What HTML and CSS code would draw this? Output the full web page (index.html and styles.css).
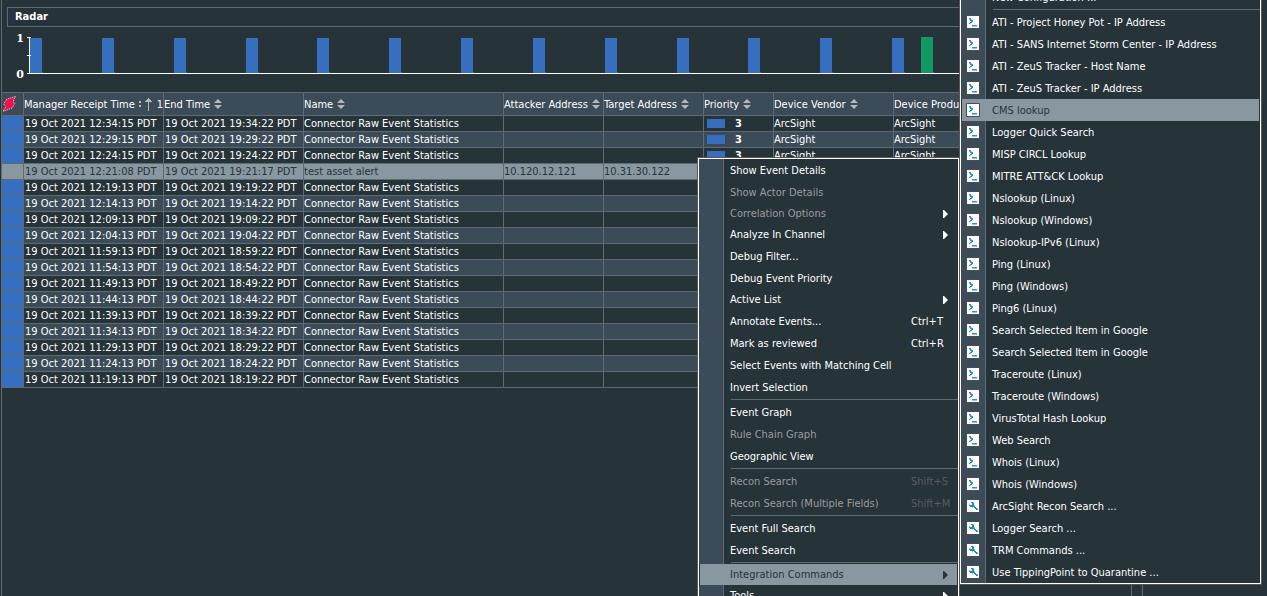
FILE: index.html
```html
<!DOCTYPE html>
<html lang="en">
<head>
<meta charset="utf-8">
<title>Radar</title>
<link rel="stylesheet" href="styles.css">
</head>
<body>
<svg class="defs" aria-hidden="true">
  <symbol id="terminal" viewBox="0 0 14 14">
    <rect x="0" y="0" width="14" height="14" rx="1" fill="#4a4c50"/>
    <rect x="1" y="1" width="12" height="12" fill="#fdfcff"/>
    <path d="M3 3h2v1h1v1h1v2H6v1H5v1H3V8h1V7h1V6H4V5H3z" fill="#2b90c4"/>
    <path d="M3 4h1v1H3zM5 4h1v1H5zM4 8h1v1H4z" fill="#8accea"/>
    <path d="M6 10h5v1H6z" fill="#2f8fc0"/><path d="M6 11h5v1H6z" fill="#8accea"/>
  </symbol>
  <symbol id="wrench" viewBox="0 0 14 14">
    <rect x="0" y="0" width="14" height="14" rx="1" fill="#4a4c50"/>
    <rect x="1" y="1" width="12" height="12" fill="#fdfcff"/>
    <path d="M5 3h2v1h1v3h1v1h1v1h1v1h1v1h-2v-1H9V9H8V8H4V7H3V5h1v1h2V4H5z" fill="#1b8cc2"/>
    <path d="M7 3h1v1H7zM3 5h1v1H3zM8 6h1v1H8zM11 9h1v1h-1zM6 8h1v1H6z" fill="#8accea"/>
  </symbol>
  <symbol id="sort" viewBox="0 0 8 10"><path d="M4 0 8 4H0zM0 6h8L4 10z" fill="#b4b8bb"/></symbol>
</svg>
<main class="workspace">
  <section class="panel">
    <h1 class="title">Radar</h1>
    <svg class="chart" role="img" aria-label="Events over time">
      <g id="bars"></g>
      <path d="M25 10.5h4M25 28.5h4M27.5 10v36" stroke="#fff" fill="none"/>
      <rect x="25" y="46" width="100%" height="1" fill="#fff"/>
      <text x="22" y="15" text-anchor="end">1</text>
      <text x="22" y="51" text-anchor="end">0</text>
    </svg>
    <table class="events">
      <colgroup><col class="w22"><col class="w140"><col class="w140"><col class="w200"><col class="w100"><col class="w100"><col class="w70"><col class="w120"><col></colgroup>
      <thead><tr>
        <th aria-label="Severity"><svg class="bolt" viewBox="0 0 14 16"><path d="M13.500 .5 11 6l2 1.500-3 4.500-9 3.500 3-5-2.500-2.500 3.500-5z" fill="#f0104c" stroke="#f4dfe6" stroke-width="1" stroke-dasharray="1 1"/></svg></th>
        <th><span class="head">Manager Receipt Time <svg class="sort cut" viewBox="0 0 3 10"><path d="M1 2h2v2H1zM1 6h2v2H1z" fill="#b4b8bb"/></svg><svg class="up" viewBox="0 0 7 14"><path d="M3.500 1v13M0 4.500h7M1 3.500h5M2 2.500h3" stroke="#b4b8bb"/></svg><span class="rank">1</span></span></th>
        <th><span class="head">End Time <svg class="sort"><use href="#sort"/></svg></span></th>
        <th><span class="head">Name <svg class="sort"><use href="#sort"/></svg></span></th>
        <th><span class="head">Attacker Address <svg class="sort"><use href="#sort"/></svg></span></th>
        <th><span class="head">Target Address <svg class="sort"><use href="#sort"/></svg></span></th>
        <th><span class="head">Priority <svg class="sort"><use href="#sort"/></svg></span></th>
        <th><span class="head">Device Vendor <svg class="sort"><use href="#sort"/></svg></span></th>
        <th><span class="head">Device Product</span></th>
      </tr></thead>
      <tbody id="rows"></tbody>
    </table>
  </section>
  <section class="panel side"></section>
</main>
<nav class="menu context" id="context" aria-label="Event actions"></nav>
<nav class="menu sub" id="sub" aria-label="Integration commands"></nav>
<script src="app.js"></script>
</body>
</html>
```
FILE: styles.css
```css
* { box-sizing: border-box; }
body {
  margin: 0;
  min-height: 100vh;
  overflow: hidden;
  position: relative;
  background: #263339;
  color: #fff;
  font: 11px/15px "DejaVu Sans Condensed", "DejaVu Sans", sans-serif;
}
.defs { position: absolute; width: 0; height: 0; }
.workspace {
  display: grid;
  grid-template-columns: 1fr 118px;
  gap: 10px;
  height: 100vh;
  padding: 0 7px 0 1px;
}
.panel { border: solid #5f6b70; border-width: 0 1px; padding-top: 7px; min-width: 0; overflow: hidden; }
.panel.side { border-right: 0; }
.title {
  margin: 0 5px;
  height: 20px;
  padding-left: 7px;
  border: 1px solid #5f6b70;
  font: bold 11px/18px "DejaVu Sans Condensed", "DejaVu Sans", sans-serif;
}
.chart { display: block; width: 100%; height: 65px; }
.chart text { fill: #fff; font: bold 11px "DejaVu Serif", serif; }
.events { width: 100%; table-layout: fixed; border-collapse: separate; border-spacing: 0; border-top: 1px solid #5f6b70; }
.w22 { width: 22px; }
.w70 { width: 70px; }
.w100 { width: 100px; }
.w120 { width: 120px; }
.w140 { width: 140px; }
.w200 { width: 200px; }
th, td { padding: 0; border: solid #5f6b70; border-width: 0 1px 1px 0; text-align: left; white-space: nowrap; overflow: hidden; }
th { height: 23px; font-weight: normal; background: #3c4b58; }
td { height: 16px; }
tbody tr:nth-child(even) { background: #3c4b58; }
tbody tr.selected { background: #8997a0; color: #263339; }
td.date { padding-left: 1px; }
.mark { background: #366ec0; }
.selected .mark { background: #8997a0; }
.head { display: flex; align-items: center; }
.sort { width: 8px; height: 10px; margin-left: 4px; flex: none; }
.sort.cut { width: 3px; margin-left: 3px; }
.up { width: 7px; height: 14px; margin-left: 4px; flex: none; }
.rank { margin-left: auto; }
.bolt { display: block; width: 14px; height: 16px; }
.level { display: flex; align-items: center; gap: 10px; padding-left: 3px; font-weight: bold; }
.swatch { width: 18px; height: 9px; background: #366ec0; }

.menu {
  position: absolute;
  border: 1px solid #fff;
  box-shadow: 0 0 0 1px #5a5656;
  background: #263339;
}
.context { left: 698px; top: 158px; width: 261px; }
.sub { left: 960px; top: -15px; width: 301px; }
.item {
  display: grid;
  grid-template-columns: 25px 1fr auto;
  align-items: center;
  width: 100%;
  height: 22px;
  padding: 0;
  border: 0;
  background: linear-gradient(90deg, #3c4b58 24px, #5f6b70 24px, #5f6b70 25px, transparent 25px);
  color: inherit;
  font: inherit;
  text-align: left;
  white-space: nowrap;
}
.item.more { height: 21px; }
.item:disabled { color: #9c9c9c; }
.item.current { background: #8997a0; border: solid #263339; border-width: 0 1px; color: #263339; }
.label { padding-left: 6px; }
.current .label { padding-left: 5px; }
.key { width: 47px; }
.item:disabled .key { color: #5b5b5b; }
.arrow { width: 5px; height: 8px; margin-right: 10px; fill: #fff; }
.current .arrow { margin-right: 9px; fill: #263339; }
.icon { width: 14px; height: 14px; margin-left: 5px; }
.current .icon { margin-left: 4px; }
.sep {
  height: 3px;
  margin: 0;
  border: 0;
  background: linear-gradient(90deg, #3c4b58 24px, #5f6b70 24px, #5f6b70 25px, transparent 25px);
}
.sep::after { content: ""; display: block; height: 1px; margin-left: 32px; border-bottom: 1px solid #5f6b70; }
```
FILE: app.js
```js
const bars = [30, 102, 174, 246, 317, 389, 461, 533, 605, 677, 748, 820, 892];
document.getElementById("bars").innerHTML = bars
  .map(x => `<path d="M${x - 2} 11h12v34h1v1h-13z" fill="#366ec0"/>`)
  .join("") + '<path d="M919 10h12v35h1v1h-13z" fill="#119961"/>';

const times = [
  ["12:34:15", "19:34:22", 3], ["12:29:15", "19:29:22", 3], ["12:24:15", "19:24:22", 3],
  ["12:21:08", "19:21:17"], ["12:19:13", "19:19:22"], ["12:14:13", "19:14:22"],
  ["12:09:13", "19:09:22"], ["12:04:13", "19:04:22"], ["11:59:13", "18:59:22"],
  ["11:54:13", "18:54:22"], ["11:49:13", "18:49:22"], ["11:44:13", "18:44:22"],
  ["11:39:13", "18:39:22"], ["11:34:13", "18:34:22"], ["11:29:13", "18:29:22"],
  ["11:24:13", "18:24:22"], ["11:19:13", "18:19:22"]
];
document.getElementById("rows").innerHTML = times.map(([received, ended, priority], i) => {
  const alert = i === 3;
  const vendor = priority ? "ArcSight" : "";
  return `<tr class="${alert ? "selected" : ""}"><td class="mark"></td>
    <td class="date">19 Oct 2021 ${received} PDT</td><td class="date">19 Oct 2021 ${ended} PDT</td>
    <td>${alert ? "test asset alert" : "Connector Raw Event Statistics"}</td>
    <td>${alert ? "10.120.12.121" : ""}</td><td>${alert ? "10.31.30.122" : ""}</td>
    <td>${priority ? `<span class="level"><span class="swatch"></span>${priority}</span>` : ""}</td>
    <td>${vendor}</td><td>${vendor}</td></tr>`;
}).join("");

const arrow = '<svg class="arrow" viewBox="0 0 5 8"><path d="M0 0h1l4 4-4 4H0z"/></svg>';
const contextItems = [
  ["Show Event Details"], ["Show Actor Details", "off"], ["Correlation Options", "off more"],
  ["Analyze In Channel", "more"], ["Debug Filter..."], ["Debug Event Priority"], ["Active List", "more"],
  ["Annotate Events...", "", "Ctrl+T"], ["Mark as reviewed", "", "Ctrl+R"],
  ["Select Events with Matching Cell"], ["Invert Selection"], null,
  ["Event Graph"], ["Rule Chain Graph", "off"], ["Geographic View"], null,
  ["Recon Search", "off", "Shift+S"], ["Recon Search (Multiple Fields)", "off", "Shift+M"], null,
  ["Event Full Search"], ["Event Search"], null,
  ["Integration Commands", "more current"], ["Tools", "more"]
];
document.getElementById("context").innerHTML = contextItems.map(item => {
  if (!item) return '<hr class="sep">';
  const [label, state = "", key] = item;
  const end = key ? `<span class="key">${key}</span>` : state.includes("more") ? arrow : "";
  return `<button class="item ${state}" ${state.includes("off") ? "disabled" : ""}><span></span><span class="label">${label}</span>${end}</button>`;
}).join("");

const commands = [
  "ATI - Project Honey Pot - IP Address", "ATI - SANS Internet Storm Center - IP Address",
  "ATI - ZeuS Tracker - Host Name", "ATI - ZeuS Tracker - IP Address", "CMS lookup",
  "Logger Quick Search", "MISP CIRCL Lookup", "MITRE ATT&amp;CK Lookup", "Nslookup (Linux)",
  "Nslookup (Windows)", "Nslookup-IPv6 (Linux)", "Ping (Linux)", "Ping (Windows)", "Ping6 (Linux)",
  "Search Selected Item in Google", "Search Selected Item in Google", "Traceroute (Linux)",
  "Traceroute (Windows)", "VirusTotal Hash Lookup", "Web Search", "Whois (Linux)", "Whois (Windows)",
  "ArcSight Recon Search ...", "Logger Search ...", "TRM Commands ...", "Use TippingPoint to Quarantine ..."
];
document.getElementById("sub").innerHTML =
  '<button class="item"><span></span><span class="label">New Configuration ...</span></button><hr class="sep">' +
  commands.map(label => `<button class="item ${label === "CMS lookup" ? "current" : ""}"><svg class="icon"><use href="#${label.endsWith("...") ? "wrench" : "terminal"}"/></svg><span class="label">${label}</span></button>`).join("");
```
